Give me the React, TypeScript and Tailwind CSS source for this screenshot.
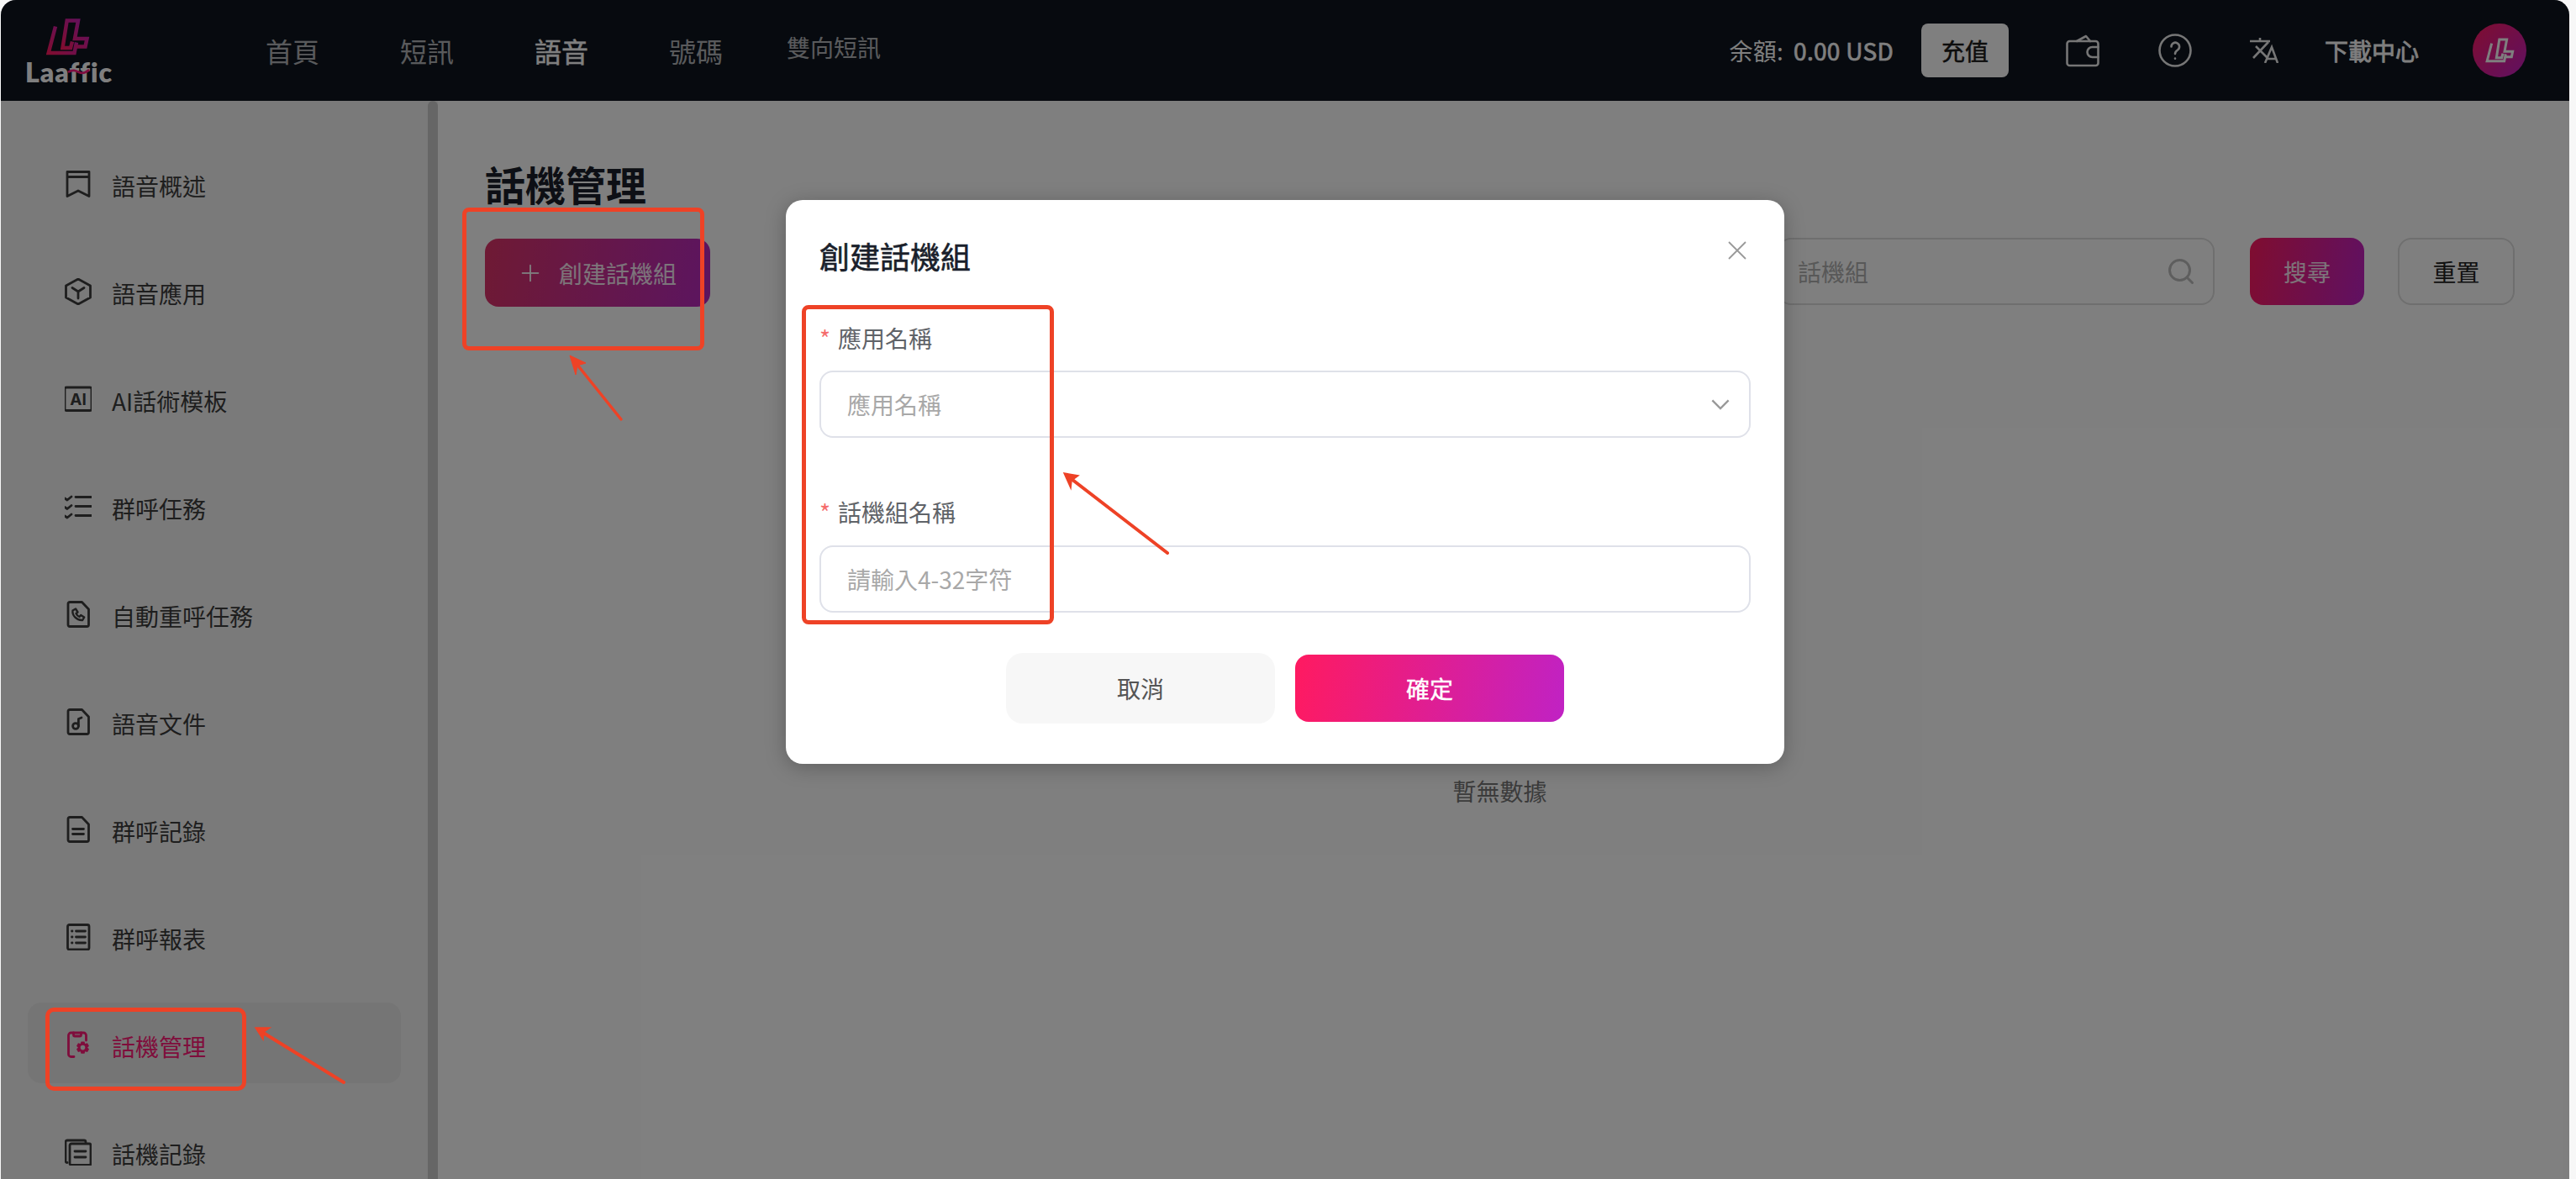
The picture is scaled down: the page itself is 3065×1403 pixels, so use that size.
import { Plus, Search } from "lucide-react";
import type { ReactNode } from "react";

const Icon = ({ children }: { children: ReactNode }) => (
  <svg viewBox="0 0 32 32" className="w-8 h-8 shrink-0 -translate-y-[2px]" fill="none" stroke="currentColor" strokeWidth="2.800" strokeLinejoin="round" strokeLinecap="round">
    {children}
  </svg>
);

const doc = "M6 1.500h14.500l8 8.500v18.500a2 2 0 0 1-2 2H6a2 2 0 0 1-2-2v-25a2 2 0 0 1 2-2z";

const navItems = [
  {
    label: "語音概述",
    icon: <path d="M3 1.500h26v29l-13-6.500-13 6.500zM3 7.500h26" />,
  },
  {
    label: "語音應用",
    icon: <path d="M16 1l14.500 8v14l-14.500 8-14.500-8V9zM9 11.500l7 4.500 7-4.500M16 16v8" />,
  },
  {
    label: "AI話術模板",
    icon: (
      <>
        <rect x="0" y="2" width="32" height="27.500" rx="2" />
        <text x="16" y="23" textAnchor="middle" fontSize="19" fontWeight="700" fontFamily="Inter, sans-serif" fill="currentColor" stroke="none">
          AI
        </text>
      </>
    ),
  },
  {
    label: "群呼任務",
    icon: <path d="M13 4.500h19M13 15.500h19M13 26.500h19M0 6l3 2 5-4M0 16.500l3 2 5-4M0 27l3 2 5-4" />,
  },
  {
    label: "自動重呼任務",
    icon: (
      <>
        <path d={doc} />
        <path d="M9.500 11.500l3.500-2 2.500 4-2 1.500c.8 1.800 2.200 3.200 4 4l1.700-2 4 2.500-2 3.500c-7 .5-12.500-5.500-11.700-11.500z" strokeWidth="2.400" />
      </>
    ),
  },
  {
    label: "語音文件",
    icon: (
      <>
        <path d={doc} />
        <circle cx="13" cy="21" r="3.400" />
        <path d="M16.400 21v-8.500l3.600-1.500" />
      </>
    ),
  },
  {
    label: "群呼記錄",
    icon: (
      <>
        <path d={doc} />
        <path d="M9.500 15.500h13M9.500 21.500h13" />
      </>
    ),
  },
  {
    label: "群呼報表",
    icon: (
      <>
        <rect x="3.500" y="1.500" width="25.500" height="29.500" rx="2" />
        <path d="M8.500 9h.5M13.500 9h11M8.500 16h.5M13.500 16h11M8.500 23h.5M13.500 23h11" />
      </>
    ),
  },
  {
    label: "話機管理",
    active: true,
    icon: (
      <>
        <path d="M11 30.500H7.500a3 3 0 0 1-3-3V5a3 3 0 0 1 3-3h15a3 3 0 0 1 3 3v6" />
        <path d="M10.500 2v2.500A1.500 1.500 0 0 0 12 6h6a1.500 1.500 0 0 0 1.500-1.500V2" />
        <path
          fillRule="evenodd"
          fill="currentColor"
          stroke="none"
          d="M19.500 12.500h4l.8 2.400 2.700-.6 2 3.400-1.900 1.900 1.900 1.900-2 3.400-2.700-.6-.8 2.400h-4l-.8-2.400-2.700.6-2-3.400 1.900-1.900-1.900-1.900 2-3.400 2.700.6zM21.500 16.800a2.800 2.800 0 1 0 0 5.600 2.800 2.800 0 0 0 0-5.600z"
        />
      </>
    ),
  },
  {
    label: "話機記錄",
    icon: (
      <>
        <path d="M3 28.500a2 2 0 0 1-2-2V4a2 2 0 0 1 2-2h20a2 2 0 0 1 2 2v1" />
        <rect x="6" y="6" width="25" height="25.500" rx="2" />
        <path d="M12 15h13M12 22h13" />
      </>
    ),
  },
];

const LogoMark = ({ className, flat }: { className: string; flat?: boolean }) => (
  <svg viewBox="0 0 54 44" className={className} fill="none" strokeWidth="4.500" strokeLinejoin="miter">
    <defs>
      <linearGradient id="logoGrad" x1="0" y1="1" x2="1" y2="0">
        <stop offset="0" stopColor="#ff1a60" />
        <stop offset="1" stopColor="#c022c4" />
      </linearGradient>
    </defs>
    <g stroke={flat ? "#ffffff" : "url(#logoGrad)"}>
      <path d="M13 9.500L4.700 41H35.500L38 28.500" />
      <path d="M33 27.500L31 35H21.500L26.700 2.500H40L36 24H50.500L48.500 33.500H36.500" />
    </g>
  </svg>
);

const Header = () => (
  <header className="h-[120px] shrink-0 bg-[#0e141e] flex items-center">
    <div className="relative w-[105px] h-[78px] ml-[29px] shrink-0 flex flex-col items-start">
      <LogoMark className="w-[54px] h-11 shrink-0 ml-[23px] mt-px" />
      <span className="block text-[32px] leading-[30px] font-extrabold text-white tracking-[1px] font-['Lato',sans-serif] mt-[5px]">Laaffic</span>
      <svg viewBox="0 0 30 8" className="absolute left-[50px] top-[60px] w-7 h-2" fill="none">
        <path d="M1 5c6-4 10-2 14 0s8 1 13-3" stroke="#ff1a80" strokeWidth="3" />
      </svg>
    </div>
    <nav className="flex items-center ml-[181px] text-[32px] leading-[44px] text-white/70">
      <span>首頁</span>
      <span className="ml-24">短訊</span>
      <span className="ml-24 text-white [-webkit-text-stroke:0.5px_currentColor]">語音</span>
      <span className="ml-24">號碼</span>
      <span className="ml-[76px] text-[28px] -translate-y-1">雙向短訊</span>
    </nav>
    <div className="ml-auto flex items-center text-white">
      <span className="text-[28px] leading-10 tracking-[0.3px]">
        余額:<span className="ml-3 [-webkit-text-stroke:0.7px_currentColor]">0.00 USD</span>
      </span>
      <button className="ml-[33px] w-[104px] h-16 bg-white rounded-lg text-[28px] text-[#1a1a1a] [-webkit-text-stroke:0.5px_currentColor]">充值</button>
      <svg viewBox="0 0 40 40" className="ml-[68px] w-10 h-10" fill="none" stroke="currentColor" strokeWidth="2.600" strokeLinejoin="round" strokeLinecap="round" opacity="0.92">
        <rect x="1.500" y="9" width="37" height="29" rx="3" />
        <path d="M13 9l11-6 5 6M38.500 16h-7a6 6 0 0 0 0 12h7" />
      </svg>
      <svg viewBox="0 0 40 40" className="ml-[70px] w-10 h-10" fill="none" stroke="currentColor" strokeWidth="2.600" strokeLinecap="round" opacity="0.92">
        <circle cx="20" cy="20" r="18.500" />
        <path d="M15.500 15.500a4.800 4.800 0 1 1 7.500 4c-2 1.300-3 2-3 4.500M20 29.500v.3" />
      </svg>
      <svg viewBox="0 0 34 30" className="ml-[69px] w-[34px] h-[30px]" fill="none" stroke="currentColor" strokeWidth="2.600" opacity="0.92">
        <path d="M0 4h24M12 0v4M7 10l15 15M22 5L4 24M18 30l8-19 7 19M20 25h11" />
      </svg>
      <span className="ml-[55px] text-[28px] leading-10 [-webkit-text-stroke:0.8px_currentColor]">下載中心</span>
      <div className="ml-16 mr-[51px] w-16 h-16 rounded-full bg-[linear-gradient(135deg,#ff1a60,#c022c4)] flex items-center justify-center">
        <LogoMark flat className="w-9 h-[30px]" />
      </div>
    </div>
  </header>
);

const Sidebar = () => (
  <aside className="w-[520px] shrink-0 flex bg-[#f5f5f5]">
    <div className="flex-1 pt-[49px] px-8 flex flex-col gap-8">
      {navItems.map((item) => (
        <div
          key={item.label}
          className={
            item.active
              ? "h-24 shrink-0 rounded-2xl bg-[#ebebeb] pl-11 pt-2 flex items-center gap-6 text-[28px] text-[#ff1a78]"
              : "h-24 shrink-0 rounded-2xl pl-11 pt-2 flex items-center gap-6 text-[28px] text-[#3d3d3d]"
          }
        >
          <Icon>{item.icon}</Icon>
          <span>{item.label}</span>
        </div>
      ))}
    </div>
    <div className="w-3 shrink-0 bg-[#cccccc] rounded-t-md" />
  </aside>
);

const Main = () => (
  <main className="flex-1 bg-white pl-14 pr-[65px] pt-[74px]">
    <h1 className="text-[48px] leading-[48px] font-bold text-[#1a1f2b]">話機管理</h1>
    <div className="mt-[41px] flex items-start justify-between">
      <button className="mt-px w-[268px] h-[81px] rounded-2xl bg-[linear-gradient(100deg,#de3468,#b82ac0)] flex items-center pl-[38px] gap-[18px] text-[28px] text-white/90">
        <Plus size={32} strokeWidth={1.5} />
        <span>創建話機組</span>
      </button>
      <div className="flex items-center">
        <div className="w-[520px] h-20 border-2 border-[#dedede] rounded-2xl pl-[22px] pr-[20px] flex items-center justify-between text-[28px] text-[#b0b0b0]">
          <span>話機組</span>
          <Search size={36} strokeWidth={2} className="text-[#bdbdbd]" />
        </div>
        <button className="ml-[42px] w-[136px] h-20 rounded-2xl bg-[linear-gradient(100deg,#ff1a60,#c022c4)] text-[28px] text-white/90">搜尋</button>
        <button className="ml-[40px] w-[139px] h-20 rounded-2xl border-2 border-[#dedede] text-[28px] text-[#222222]">重置</button>
      </div>
    </div>
    <p className="mt-[556px] text-center text-[28px] leading-10 text-[#777777]">暫無數據</p>
  </main>
);

const FieldLabel = ({ children }: { children: ReactNode }) => (
  <label className="flex items-center text-[28px] leading-10 text-[#5f6368]">
    <span className="w-[22px] text-[#f56c6c]">*</span>
    {children}
  </label>
);

const Modal = () => (
  <div className="absolute inset-0 bg-black/50 flex justify-center items-start pt-[238px]">
    <div className="relative w-[1188px] h-[671px] bg-white rounded-[20px] shadow-[0_4px_24px_rgba(0,0,0,0.25)] pt-[44px] px-10">
      <h2 className="text-[36px] leading-11 text-[#1a1f2b] [-webkit-text-stroke:0.6px_currentColor]">創建話機組</h2>
      <svg viewBox="0 0 22 22" className="absolute right-[45px] top-[49px] w-[22px] h-[22px]" fill="none" stroke="#999999" strokeWidth="1.800">
        <path d="M1 1l20 20M21 1L1 21" />
      </svg>
      <div className="mt-[56px]">
        <FieldLabel>應用名稱</FieldLabel>
        <div className="mt-[19px] h-20 border-2 border-[#dfe1e9] rounded-2xl pl-[31px] pr-[23px] flex items-center justify-between text-[28px] text-[#a8a8a8]">
          <span>應用名稱</span>
          <svg viewBox="0 0 24 14" className="w-[22px] h-[13px]" fill="none" stroke="#999999" strokeWidth="2.600">
            <path d="M1.500 1.500L12 12 22.500 1.500" />
          </svg>
        </div>
      </div>
      <div className="mt-[68px]">
        <FieldLabel>話機組名稱</FieldLabel>
        <input
          placeholder="請輸入4-32字符"
          className="mt-[20px] block w-full h-20 border-2 border-[#dfe1e9] rounded-2xl pl-[31px] text-[28px] placeholder:text-[#a8a8a8] outline-none"
        />
      </div>
      <div className="mt-[48px] flex justify-center items-center gap-6">
        <button className="w-[320px] h-[84px] rounded-[20px] bg-[#f7f7f7] text-[28px] text-[#555555]">取消</button>
        <button className="w-[320px] h-20 rounded-2xl bg-[linear-gradient(100deg,#ff1a60,#c022c4)] text-[28px] text-white [-webkit-text-stroke:0.4px_currentColor]">確定</button>
      </div>
    </div>
  </div>
);

// red callouts drawn on top of the screenshot
const Annotations = () => (
  <>
    <div className="absolute left-[550px] top-[247px] w-[288px] h-[170px] border-[5px] border-[#ee4226] rounded-lg" />
    <div className="absolute left-[954px] top-[363px] w-[300px] h-[380px] border-[5px] border-[#ee4226] rounded-lg" />
    <div className="absolute left-[54px] top-[1199px] w-[239px] h-[99px] border-[5px] border-[#ee4226] rounded-[10px]" />
    <svg viewBox="0 0 3065 1403" className="absolute inset-0 w-full h-full pointer-events-none" fill="#ee4226" stroke="#ee4226">
      <path d="M739 499L682 428" strokeWidth="3.500" strokeLinecap="round" fill="none" />
      <path d="M678 423l19 9-10 3-2 11z" strokeWidth="1" />
      <path d="M1389 658L1271 567" strokeWidth="4" strokeLinecap="round" fill="none" />
      <path d="M1266 563l17 3-8 6-1 9z" strokeWidth="1.500" />
      <path d="M409 1288L310 1227" strokeWidth="4" strokeLinecap="round" fill="none" />
      <path d="M304 1223l17 0-7 5-1 9z" strokeWidth="1.500" />
    </svg>
  </>
);

export default function App() {
  return (
    <div className="relative w-full h-[1403px] overflow-hidden bg-[#f7f7f7] font-['Noto_Sans_CJK_TC','Noto_Sans',sans-serif]">
      <div className="relative ml-px mr-2 h-full rounded-t-[18px] overflow-hidden flex flex-col bg-white">
        <Header />
        <div className="flex flex-1 min-h-0">
          <Sidebar />
          <Main />
        </div>
        <Modal />
      </div>
      <Annotations />
    </div>
  );
}
